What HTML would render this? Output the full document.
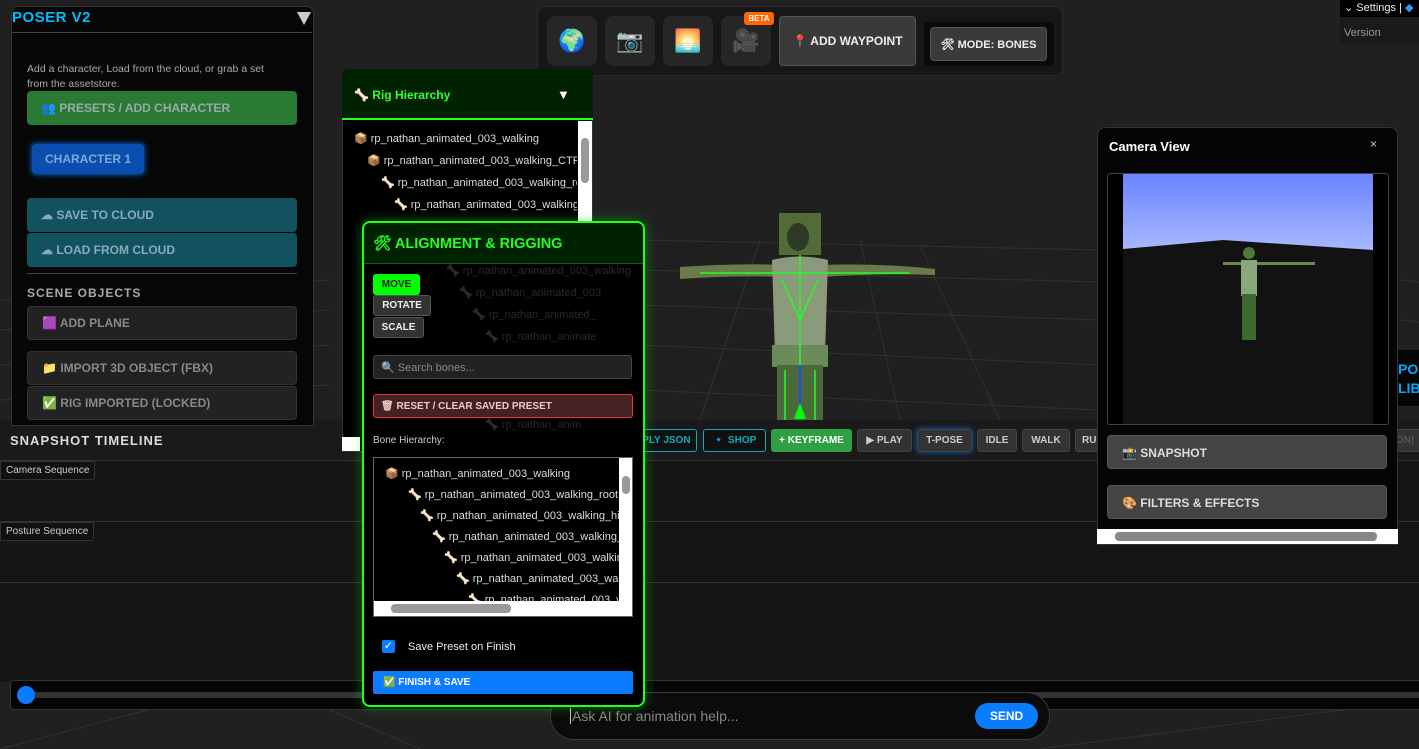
<!DOCTYPE html>
<html><head><meta charset="utf-8"><style>
*{box-sizing:border-box;margin:0;padding:0}
body{width:1419px;height:749px;overflow:hidden;background:#202020;font-family:"Liberation Sans",sans-serif;position:relative;color:#ddd}
.a{position:absolute}
.btn{position:absolute;border-radius:4px;font-weight:bold;font-size:12px;display:flex;align-items:center;padding-left:14px}
.tb{position:absolute;top:429px;height:23px;border-radius:3px;background:#333;border:1px solid #444;color:#ccc;font-size:10px;font-weight:bold;display:flex;align-items:center;justify-content:center}
.tree div{position:absolute;font-size:11px;color:#ddd;white-space:nowrap}
.ib{position:absolute;top:16px;width:50px;height:50px;background:#262626;border-radius:8px;display:flex;align-items:center;justify-content:center;font-size:22px}
.seq{position:absolute;left:0;height:19px;background:#111;border:1px solid #333;border-radius:0 0 3px 0;font-size:10px;color:#ccc;padding:3px 5px;white-space:nowrap}
</style></head><body>
<svg class="a" style="left:0;top:0" width="1419" height="749">
<g stroke="#3a3a3a" stroke-width="1" opacity=".7">
<line x1="0" y1="300" x2="330" y2="280"/><line x1="0" y1="330" x2="330" y2="310"/><line x1="0" y1="365" x2="330" y2="345"/><line x1="0" y1="400" x2="330" y2="385"/>
<line x1="640" y1="240" x2="1100" y2="250"/><line x1="640" y1="270" x2="1100" y2="282"/><line x1="640" y1="305" x2="1100" y2="320"/><line x1="640" y1="345" x2="1100" y2="365"/><line x1="640" y1="390" x2="1100" y2="410"/>
<line x1="700" y1="420" x2="760" y2="240"/><line x1="900" y1="420" x2="860" y2="240"/><line x1="1000" y1="420" x2="920" y2="245"/><line x1="1400" y1="280" x2="1419" y2="282"/><line x1="1400" y1="320" x2="1419" y2="322"/>
<line x1="0" y1="749" x2="260" y2="680"/><line x1="420" y1="749" x2="330" y2="710"/><line x1="1040" y1="749" x2="1419" y2="700"/>
</g></svg>
<svg class="a" style="left:660px;top:205px" width="300" height="220">
<rect x="119" y="8" width="42" height="42" fill="#5a7a3a" opacity=".85"/>
<ellipse cx="138" cy="32" rx="11" ry="14" fill="#2e3a26"/>
<path d="M20 62 Q80 58 120 60 L160 60 Q220 58 275 64 L275 70 Q220 68 160 72 L120 72 Q80 70 20 74Z" fill="#6a7a4a"/>
<path d="M112 55 Q140 48 168 55 L165 150 L115 150Z" fill="#8a9a7a"/>
<rect x="112" y="140" width="56" height="22" fill="#6a8a5a"/>
<rect x="117" y="160" width="46" height="60" fill="#4a6a3a"/>
<g stroke="#2f2" stroke-width="1.5" fill="none"><path d="M140 50 V220 M122 75 L140 115 L158 75 M40 68 H140 H250 M125 165 V220 M155 165 V220"/></g>
<line x1="140" y1="160" x2="140" y2="215" stroke="#24f" stroke-width="2"/>
<polygon points="140,198 134,214 146,214" fill="#0f0"/>
</svg>
<div class="a" style="left:0;top:420px;width:1419px;height:262px;background:#151515;border-top:1px solid #333"></div>
<div class="a" style="left:0;top:420px;width:1419px;height:40px;background:#1a1a1a"></div>
<div class="a" style="left:10px;top:433px;font-size:13px;font-weight:bold;letter-spacing:1px;color:#ddd">SNAPSHOT TIMELINE</div>
<div class="a" style="left:0;top:460px;width:1419px;height:1px;background:#333"></div>
<div class="a" style="left:0;top:521px;width:1419px;height:1px;background:#333"></div>
<div class="a" style="left:0;top:582px;width:1419px;height:1px;background:#333"></div>
<div class="seq" style="top:461px">Camera Sequence</div>
<div class="seq" style="top:522px">Posture Sequence</div>
<div class="a" style="left:10px;top:680px;width:1420px;height:30px;background:#050505;border:1px solid #333;border-radius:4px"></div>
<div class="a" style="left:26px;top:692px;width:1400px;height:6px;background:#333"></div>
<div class="a" style="left:17px;top:686px;width:18px;height:18px;border-radius:50%;background:#0a7cff"></div>
<div class="a" style="left:550px;top:692px;width:500px;height:48px;background:#0b0b0b;border:1px solid #3a3a3a;border-radius:24px"></div>
<div class="a" style="left:570px;top:708px;font-size:14px;color:#888;border-left:1px solid #ccc;padding-left:1px">Ask AI for animation help...</div>
<div class="a" style="left:975px;top:703px;width:63px;height:26px;background:#0a7cff;border-radius:13px;color:#fff;font-weight:bold;font-size:12px;display:flex;align-items:center;justify-content:center">SEND</div>
<div class="tb" style="left:590px;width:107px;background:#111;border-color:#1ab;color:#1ab">STE &amp; APPLY JSON</div>
<div class="tb" style="left:703px;width:63px;background:#111;border-color:#1ab;color:#1ab">🔹 SHOP</div>
<div class="tb" style="left:771px;width:81px;background:#2ea043;border-color:#2ea043;color:#fff">+ KEYFRAME</div>
<div class="tb" style="left:857px;width:55px">▶ PLAY</div>
<div class="tb" style="left:917px;width:55px;box-shadow:0 0 6px #06c">T-POSE</div>
<div class="tb" style="left:977px;width:40px">IDLE</div>
<div class="tb" style="left:1022px;width:48px">WALK</div>
<div class="tb" style="left:1075px;width:40px;justify-content:flex-start;padding-left:6px">RU</div>
<div class="tb" style="left:1385px;width:40px;color:#555">ON)</div>
<div class="a" style="left:537px;top:6px;width:526px;height:70px;background:#171717;border:1px solid #2a2a2a;border-radius:8px"></div>
<div class="ib" style="left:547px">🌍</div>
<div class="ib" style="left:605px">📷</div>
<div class="ib" style="left:663px">🌅</div>
<div class="ib" style="left:721px">🎥</div>
<div class="a" style="left:744px;top:12px;width:30px;height:13px;background:#f60;border-radius:3px;font-size:8px;font-weight:bold;color:#fff;text-align:center;line-height:13px">BETA</div>
<div class="a" style="left:779px;top:16px;width:137px;height:50px;background:#3a3a3a;border:1px solid #555;border-radius:4px;color:#eee;font-size:12px;font-weight:bold;display:flex;align-items:center;justify-content:center">📍 ADD WAYPOINT</div>
<div class="a" style="left:924px;top:22px;width:130px;height:44px;background:#0a0a0a;border-radius:4px"></div>
<div class="a" style="left:930px;top:27px;width:117px;height:34px;background:#3a3a3a;border:1px solid #555;border-radius:4px;color:#eee;font-size:11px;font-weight:bold;display:flex;align-items:center;justify-content:center">🛠 MODE: BONES</div>
<div class="a" style="left:1340px;top:0;width:79px;height:17px;background:#000;font-size:11px;color:#eee;padding:1px 4px">⌄ Settings | <span style="color:#39f">◆</span></div>
<div class="a" style="left:1340px;top:17px;width:79px;height:28px;background:#1a1a1a;font-size:11px;color:#999;padding:10px 4px">Version</div>
<div class="a" style="left:1395px;top:350px;width:24px;height:56px;background:#050505;color:#0af;font-weight:bold;font-size:14px;padding:10px 3px;line-height:19px">PO<br>LIB</div>
<div class="a" style="left:11px;top:6px;width:303px;height:420px;background:#070707;border:1px solid #333;border-radius:8px 8px 0 0"></div>
<div class="a" style="left:12px;top:9px;font-size:15px;font-weight:bold;color:#00bfff;letter-spacing:.5px">POSER V2</div>
<div class="a" style="left:297px;top:12px;width:0;height:0;border-left:7px solid transparent;border-right:7px solid transparent;border-top:13px solid #ccc"></div>
<div class="a" style="left:12px;top:32px;width:300px;height:1px;background:#444"></div>
<div class="a" style="left:27px;top:62px;font-size:10.5px;color:#aaa;line-height:15px;width:255px">Add a character, Load from the cloud, or grab a set from the assetstore.</div>
<div class="btn" style="left:27px;top:91px;width:270px;height:34px;background:#2a7a33;color:#9aa">👥 PRESETS / ADD CHARACTER</div>
<div class="btn" style="left:32px;top:144px;width:112px;height:30px;background:#0a4fb0;color:#7fa6d6;box-shadow:0 0 6px #07f;padding-left:13px">CHARACTER 1</div>
<div class="btn" style="left:27px;top:198px;width:270px;height:34px;background:#11525e;color:#8ab">☁ SAVE TO CLOUD</div>
<div class="btn" style="left:27px;top:233px;width:270px;height:34px;background:#11525e;color:#8ab">☁ LOAD FROM CLOUD</div>
<div class="a" style="left:27px;top:273px;width:270px;height:1px;background:#444"></div>
<div class="a" style="left:27px;top:286px;font-size:12px;font-weight:bold;color:#aaa;letter-spacing:1px">SCENE OBJECTS</div>
<div class="btn" style="left:27px;top:306px;width:270px;height:34px;background:#222;border:1px solid #333;color:#888">🟪 ADD PLANE</div>
<div class="btn" style="left:27px;top:351px;width:270px;height:34px;background:#222;border:1px solid #333;color:#888">📁 IMPORT 3D OBJECT (FBX)</div>
<div class="btn" style="left:27px;top:386px;width:270px;height:34px;background:#222;border:1px solid #333;color:#888">✅ RIG IMPORTED (LOCKED)</div>
<div class="a" style="left:342px;top:69px;width:251px;height:383px;background:#000;border:1px solid #333;border-radius:6px 6px 0 0"></div>
<div class="a" style="left:342px;top:69px;width:251px;height:51px;background:#002200;border-bottom:2px solid #2f2;border-radius:6px 6px 0 0"></div>
<div class="a" style="left:354px;top:88px;font-size:12px;font-weight:bold;color:#33ff33">🦴 Rig Hierarchy</div>
<div class="a" style="left:557px;top:87px;font-size:13px;color:#fff">▼</div>
<div class="a" style="left:578px;top:121px;width:14px;height:316px;background:#fff"></div>
<div class="a" style="left:581px;top:138px;width:8px;height:45px;background:#999;border-radius:4px"></div>
<div class="tree">
<div style="left:354px;top:132px">📦 rp_nathan_animated_003_walking</div>
<div style="left:367px;top:154px;width:210px;overflow:hidden">📦 rp_nathan_animated_003_walking_CTRL</div>
<div style="left:381px;top:176px;width:196px;overflow:hidden">🦴 rp_nathan_animated_003_walking_root</div>
<div style="left:394px;top:198px;width:183px;overflow:hidden">🦴 rp_nathan_animated_003_walking_hips</div>
</div>
<div class="a" style="left:342px;top:437px;width:18px;height:14px;background:#fff"></div>
<div class="a" style="left:362px;top:221px;width:283px;height:486px;background:#000;border:2px solid #2f2;border-radius:8px;box-shadow:0 0 12px rgba(0,255,0,.4)"></div>
<div class="a" style="left:364px;top:223px;width:279px;height:41px;background:#002200;border-bottom:1px solid #1a5a1a;border-radius:6px 6px 0 0"></div>
<div class="a" style="left:373px;top:235px;font-size:14.5px;font-weight:bold;color:#2f2">🛠 ALIGNMENT &amp; RIGGING</div>
<div class="tree" style="opacity:.18">
<div style="left:446px;top:264px">🦴 rp_nathan_animated_003_walking</div>
<div style="left:459px;top:286px">🦴 rp_nathan_animated_003</div>
<div style="left:472px;top:308px">🦴 rp_nathan_animated_</div>
<div style="left:485px;top:330px">🦴 rp_nathan_animate</div>
<div style="left:485px;top:418px">🦴 rp_nathan_anim</div>
</div>
<div class="a" style="left:373px;top:274px;width:47px;height:21px;background:#0f0;border-radius:3px;font-size:10px;font-weight:bold;color:#222;display:flex;align-items:center;justify-content:center">MOVE</div>
<div class="a" style="left:373px;top:295px;width:58px;height:21px;background:#333;border:1px solid #555;border-radius:3px;font-size:10px;font-weight:bold;color:#eee;display:flex;align-items:center;justify-content:center">ROTATE</div>
<div class="a" style="left:373px;top:317px;width:51px;height:21px;background:#333;border:1px solid #555;border-radius:3px;font-size:10px;font-weight:bold;color:#eee;display:flex;align-items:center;justify-content:center">SCALE</div>
<div class="a" style="left:373px;top:355px;width:259px;height:24px;background:#222;border:1px solid #444;border-radius:3px;font-size:11px;color:#888;padding:5px 7px">🔍 Search bones...</div>
<div class="a" style="left:373px;top:394px;width:260px;height:24px;background:#442222;border:1px solid #e33;border-radius:3px;font-size:10px;font-weight:bold;color:#f0c8c8;padding:6px 7px">🗑 RESET / CLEAR SAVED PRESET</div>
<div class="a" style="left:373px;top:435px;font-size:10px;color:#ccc">Bone Hierarchy:</div>
<div class="a" style="left:373px;top:457px;width:260px;height:160px;background:#000;border:1px solid #666;overflow:hidden">
<div class="tree">
<div style="left:11px;top:9px">📦 rp_nathan_animated_003_walking</div>
<div style="left:34px;top:30px">🦴 rp_nathan_animated_003_walking_root</div>
<div style="left:46px;top:51px">🦴 rp_nathan_animated_003_walking_hips</div>
<div style="left:58px;top:72px">🦴 rp_nathan_animated_003_walking_spine</div>
<div style="left:70px;top:93px">🦴 rp_nathan_animated_003_walking_spine1</div>
<div style="left:82px;top:114px">🦴 rp_nathan_animated_003_walking_spine2</div>
<div style="left:94px;top:135px">🦴 rp_nathan_animated_003_walking_neck</div>
</div>
<div class="a" style="left:245px;top:0;width:14px;height:158px;background:#fff"></div>
<div class="a" style="left:248px;top:18px;width:8px;height:18px;background:#999;border-radius:4px"></div>
<div class="a" style="left:0;top:143px;width:258px;height:16px;background:#fff"></div>
<div class="a" style="left:17px;top:146px;width:120px;height:9px;background:#999;border-radius:4px"></div>
</div>
<div class="a" style="left:382px;top:640px;width:13px;height:13px;background:#0a7cff;border-radius:2px;color:#fff;font-size:11px;line-height:13px;text-align:center">✓</div>
<div class="a" style="left:408px;top:641px;font-size:11px;color:#eee">Save Preset on Finish</div>
<div class="a" style="left:373px;top:671px;width:260px;height:23px;background:#0a7cff;border-radius:2px;font-size:10px;font-weight:bold;color:#fff;padding:6px 10px">✅ FINISH &amp; SAVE</div>
<div class="a" style="left:1097px;top:127px;width:301px;height:418px;background:#050505;border:1px solid #333;border-radius:8px 8px 0 0"></div>
<div class="a" style="left:1109px;top:139px;font-size:13px;font-weight:bold;color:#fff">Camera View</div>
<div class="a" style="left:1370px;top:137px;font-size:12px;color:#ccc">×</div>
<div class="a" style="left:1107px;top:173px;width:282px;height:252px;background:#000;border:1px solid #444;border-radius:3px"></div>
<div class="a" style="left:1123px;top:174px;width:250px;height:250px;background:#121212"></div>
<svg class="a" style="left:1123px;top:174px" width="250" height="250">
<defs><linearGradient id="s" x1="0" y1="0" x2="0" y2="1"><stop offset="0" stop-color="#6a84ff"/><stop offset="1" stop-color="#a8b8ff"/></linearGradient></defs>
<polygon points="0,0 250,0 250,76 100,66 0,75" fill="url(#s)"/>
<rect x="100" y="88" width="92" height="3" fill="#6a8a4a"/>
<rect x="118" y="86" width="16" height="36" fill="#8aa87a"/>
<rect x="119" y="120" width="14" height="46" fill="#3f6a2f"/>
<circle cx="126" cy="79" r="6" fill="#4a7a3a"/>
</svg>
<div class="a" style="left:1107px;top:435px;width:280px;height:34px;background:#444;border:1px solid #555;border-radius:4px;font-size:12px;font-weight:bold;color:#ddd;padding:10px 14px">📸 SNAPSHOT</div>
<div class="a" style="left:1107px;top:485px;width:280px;height:34px;background:#444;border:1px solid #555;border-radius:4px;font-size:12px;font-weight:bold;color:#ddd;padding:10px 14px">🎨 FILTERS &amp; EFFECTS</div>
<div class="a" style="left:1097px;top:529px;width:301px;height:15px;background:#fff"></div>
<div class="a" style="left:1115px;top:532px;width:262px;height:9px;background:#888;border-radius:4px"></div>
</body></html>
